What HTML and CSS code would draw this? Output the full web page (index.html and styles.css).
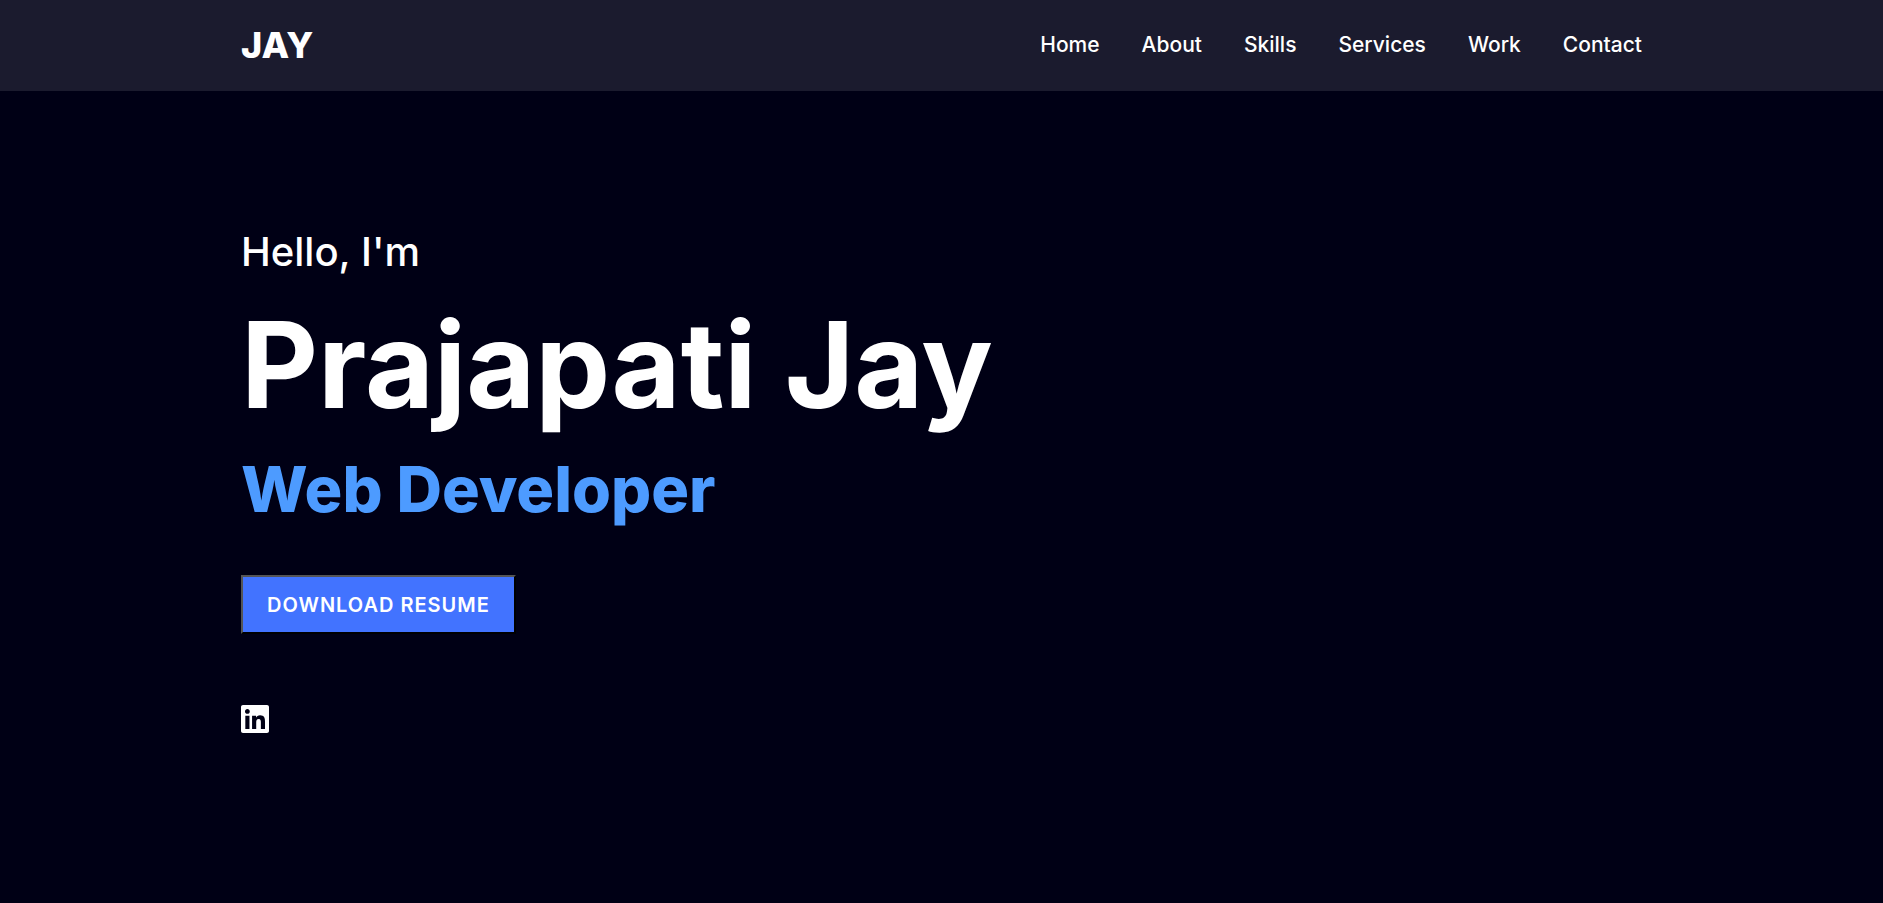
FILE: index.html
```html
<!DOCTYPE html>
<html lang="en">
<head>
<meta charset="utf-8">
<meta name="viewport" content="width=device-width, initial-scale=1">
<title>Prajapati Jay</title>
<link rel="stylesheet" href="styles.css">
</head>
<body>
<header class="navbar">
  <div class="container navbar-inner">
    <a class="logo" href="#home">JAY</a>
    <nav>
      <ul class="menu">
        <li><a href="#home">Home</a></li>
        <li><a href="#about">About</a></li>
        <li><a href="#skills">Skills</a></li>
        <li><a href="#services">Services</a></li>
        <li><a href="#work">Work</a></li>
        <li><a href="#contact">Contact</a></li>
      </ul>
    </nav>
  </div>
</header>
<main class="hero" id="home">
  <div class="container">
    <p class="greeting">Hello, I'm</p>
    <h1 class="name">Prajapati Jay</h1>
    <h2 class="role">Web Developer</h2>
    <button class="resume" type="button">DOWNLOAD RESUME</button>
    <a class="social" href="#linkedin" aria-label="LinkedIn">
      <svg viewBox="0 32 448 448" aria-hidden="true"><path fill="currentColor" d="M416 32H31.900C14.300 32 0 46.500 0 64.300v383.400C0 465.500 14.300 480 31.900 480H416c17.600 0 32-14.500 32-32.300V64.300c0-17.800-14.400-32.300-32-32.300zM135.400 416H69V202.200h66.500V416zm-33.200-243c-21.300 0-38.500-17.300-38.500-38.500S80.900 96 102.200 96c21.200 0 38.500 17.300 38.500 38.500 0 21.300-17.200 38.500-38.500 38.500zm282.100 243h-66.400V312c0-24.800-.5-56.700-34.500-56.700-34.600 0-39.900 27-39.900 54.900V416h-66.400V202.200h63.700v29.200h.9c8.900-16.800 30.600-34.500 62.900-34.500 67.200 0 79.700 44.300 79.700 101.900V416z"/></svg>
    </a>
  </div>
</main>
</body>
</html>
```
FILE: styles.css
```css
* {
  box-sizing: border-box;
  margin: 0;
  padding: 0;
}

body {
  min-height: 100vh;
  display: flex;
  flex-direction: column;
  background: #000015;
  color: #fff;
  font-family: Inter, "Open Sans", sans-serif;
}

a {
  color: inherit;
  text-decoration: none;
}

.container {
  width: 100%;
  max-width: 1481px;
  margin: 0 auto;
  padding: 0 40px;
}

.navbar {
  background: #1b1b2e;
  padding: 20px 0;
}

.navbar-inner {
  display: flex;
  align-items: flex-start;
  justify-content: space-between;
}

.logo {
  font-size: 36px;
  font-weight: 800;
  line-height: 51px;
}

.menu {
  display: flex;
  gap: 42px;
  list-style: none;
  font-size: 21px;
  font-weight: 500;
  line-height: 49px;
}

.hero {
  flex: 1;
  padding: 131px 0 80px;
}

.greeting {
  font-size: 40px;
  font-weight: 500;
  line-height: 60px;
}

.name {
  font-size: 119px;
  font-weight: 700;
  line-height: 166px;
}

.role {
  color: #4d9bff;
  font-size: 63px;
  font-weight: 800;
  line-height: 82px;
  margin-bottom: 45px;
}

.resume {
  display: block;
  padding: 1px 24px 0;
  border: 2px solid;
  border-color: #555 #000 #000 #555;
  background: #4273ff;
  color: #fff;
  font: inherit;
  font-size: 20px;
  font-weight: 600;
  letter-spacing: 1px;
  line-height: 54px;
  margin-bottom: 71px;
}

.social {
  display: inline-block;
}

.social svg {
  display: block;
  width: 28px;
  height: 28px;
}
```
